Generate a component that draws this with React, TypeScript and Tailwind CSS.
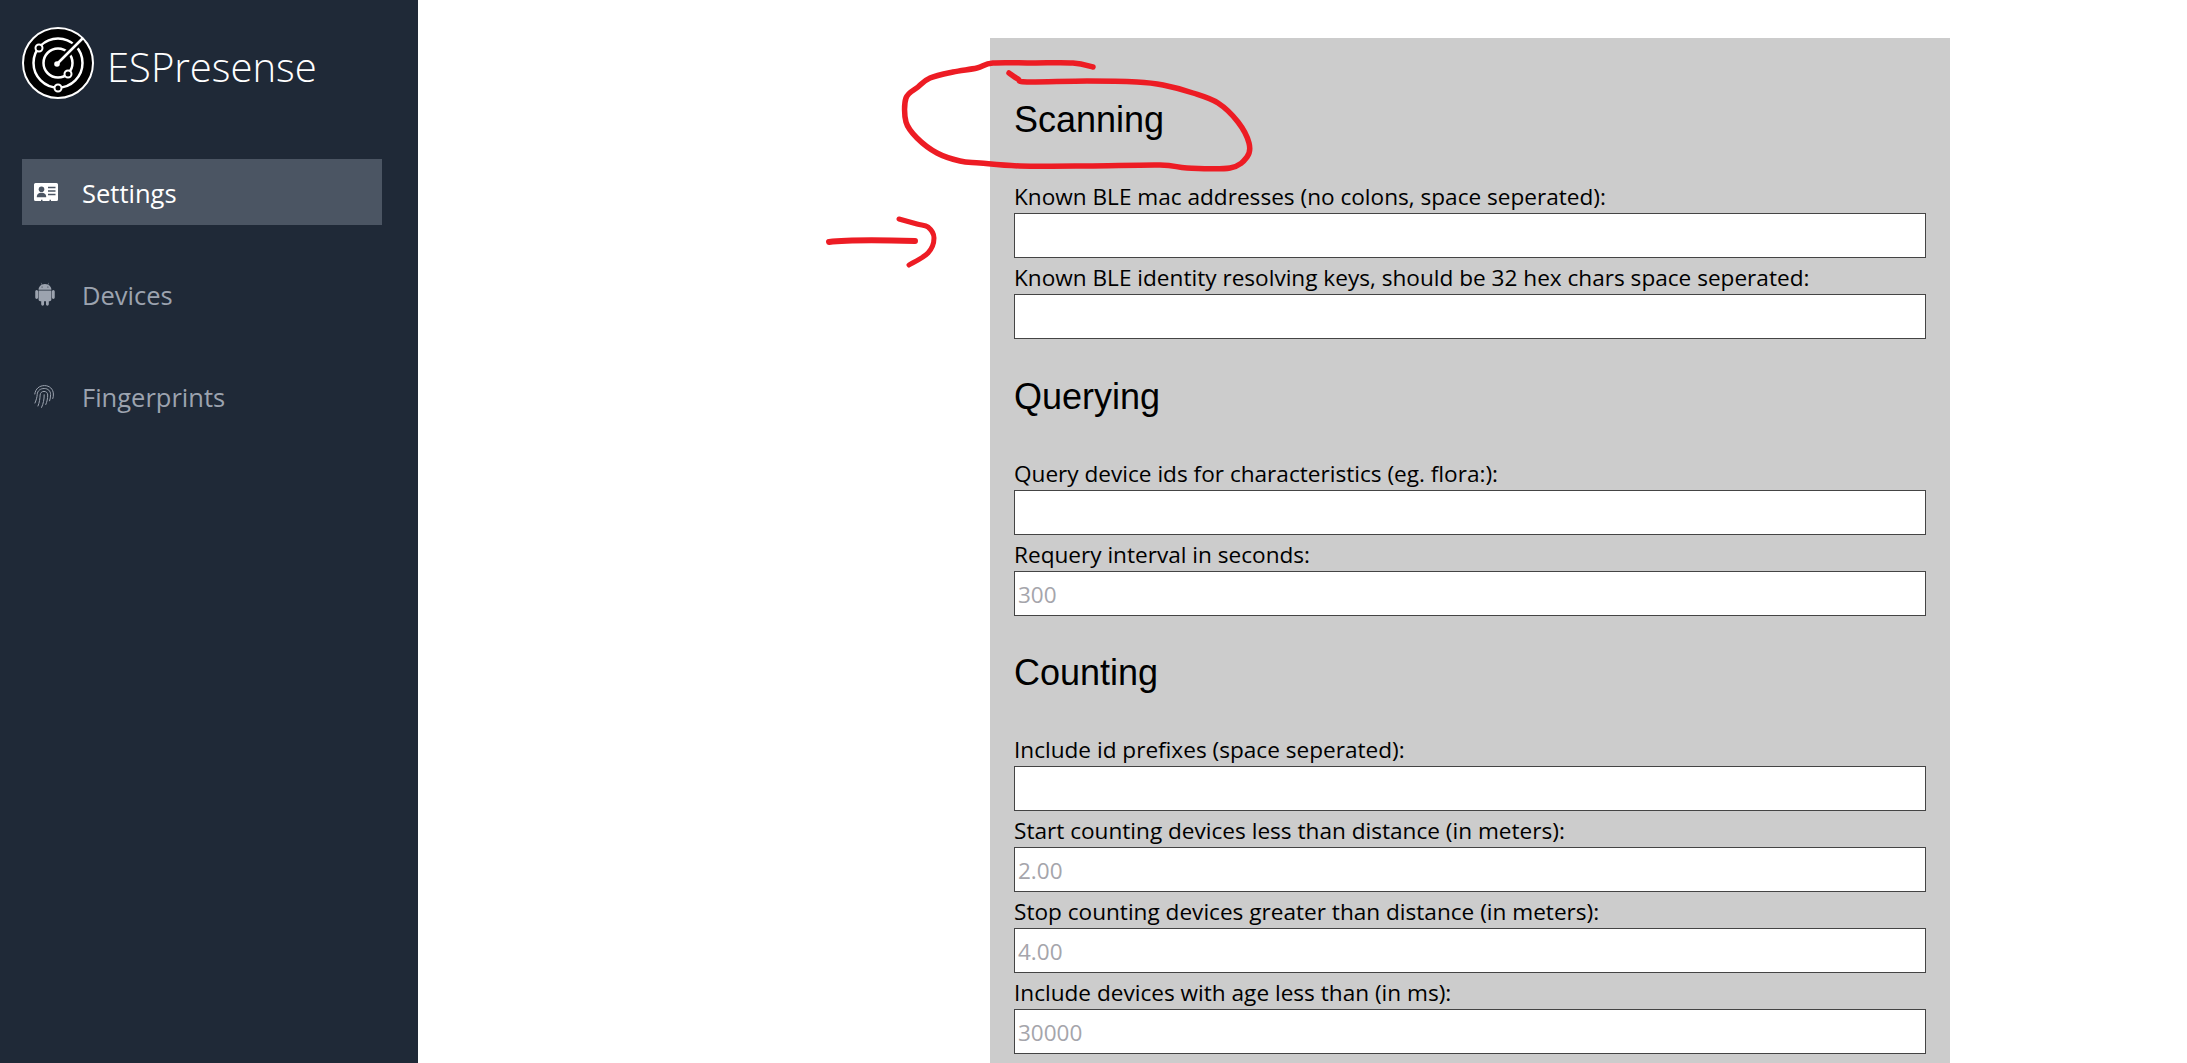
import { DiAndroid } from "react-icons/di";

const IdCard = () => (
  <svg viewBox="0 0 24 18" className="w-[24px] h-[18px]" fill="currentColor">
    <path d="M1.5 0 H22.5 A1.5 1.5 0 0 1 24 1.5 V16.5 A1.5 1.5 0 0 1 22.5 18 H17 V16.8 H15.5 V18 H8.5 V16.8 H7 V18 H1.5 A1.5 1.5 0 0 1 0 16.5 V1.5 A1.5 1.5 0 0 1 1.5 0 Z" />
    <circle cx="7.5" cy="6.2" r="2.8" fill="#4b5563" />
    <path d="M2.8 14.2 C2.8 11 5 9.8 7.5 9.8 C10 9.8 12.2 11 12.2 14.2 Z" fill="#4b5563" />
    <path d="M14 4.6 H21.5 M14 8 H21.5 M14 11.4 H21.5" stroke="#4b5563" strokeWidth="1.5" />
  </svg>
);

const FingerprintIcon = () => (
  <svg viewBox="0 0 20 23" className="w-[20px] h-[23px]" fill="none" stroke="currentColor" strokeWidth="1" strokeLinecap="round">
    <path d="M0.8 9 C1.5 3.5 5.5 0.6 10.5 0.6 C15.5 0.6 19.2 4 19.4 9 C19.5 11 19.2 12.5 18.8 13.5" />
    <path d="M1 18 C2.2 15 3 12.5 3.2 9.5 C3.5 5.5 6.5 3.5 10.2 3.5 C14 3.5 16.6 6 16.6 9.5 C16.6 12 16.2 14 15.6 15.8" />
    <path d="M4 21 C5.5 17.5 6 13.5 6.1 10 C6.2 7.8 8 6.4 10 6.4 C12.2 6.4 13.7 8 13.7 10 C13.7 13.5 13 16.8 11.8 19.5" />
    <path d="M7.6 22.4 C9.4 18.5 10.2 14.5 10.2 9.8" />
  </svg>
);

const navLinks = [
  { name: "Settings", icon: <IdCard />, active: true },
  { name: "Devices", icon: <DiAndroid className="text-[24px] ml-[-1px]" />, active: false },
  { name: "Fingerprints", icon: <FingerprintIcon />, active: false },
];

const sections = [
  {
    title: "Scanning",
    fields: [
      { label: "Known BLE mac addresses (no colons, space seperated):", placeholder: "" },
      { label: "Known BLE identity resolving keys, should be 32 hex chars space seperated:", placeholder: "" },
    ],
  },
  {
    title: "Querying",
    fields: [
      { label: "Query device ids for characteristics (eg. flora:):", placeholder: "" },
      { label: "Requery interval in seconds:", placeholder: "300" },
    ],
  },
  {
    title: "Counting",
    fields: [
      { label: "Include id prefixes (space seperated):", placeholder: "" },
      { label: "Start counting devices less than distance (in meters):", placeholder: "2.00" },
      { label: "Stop counting devices greater than distance (in meters):", placeholder: "4.00" },
      { label: "Include devices with age less than (in ms):", placeholder: "30000" },
    ],
  },
];

// red pen marks drawn on top of the screenshot
const circlePoints = [
  [1093, 67], [1073, 63], [1033, 63], [993, 63], [977, 68], [953, 72], [930, 78], [918, 87], [906, 98],
  [906, 122], [917, 138], [937, 153], [960, 161], [980, 163], [1020, 166], [1087, 166], [1160, 165],
  [1187, 168], [1230, 168], [1247, 157], [1249, 143], [1238, 122], [1218, 103], [1193, 93], [1163, 85],
  [1137, 82], [1087, 81], [1027, 82], [1018, 79], [1009, 73],
];
const arrowPoints = [[899, 219], [917, 224], [928, 227], [934, 238], [928, 253], [909, 265]];

const smooth = (pts: number[][]) => {
  let d = `M${pts[0][0]} ${pts[0][1]}`;
  for (let i = 0; i < pts.length - 1; i++) {
    const p0 = pts[Math.max(i - 1, 0)];
    const p1 = pts[i];
    const p2 = pts[i + 1];
    const p3 = pts[Math.min(i + 2, pts.length - 1)];
    d += ` C${p1[0] + (p2[0] - p0[0]) / 6} ${p1[1] + (p2[1] - p0[1]) / 6} ${p2[0] - (p3[0] - p1[0]) / 6} ${p2[1] - (p3[1] - p1[1]) / 6} ${p2[0]} ${p2[1]}`;
  }
  return d;
};

const Logo = () => (
  <svg viewBox="0 0 72 72" className="w-[72px] h-[72px] shrink-0" fill="none" stroke="white">
    <circle cx="36" cy="36" r="35" fill="black" strokeWidth="2" />
    <circle cx="36" cy="36" r="24.5" strokeWidth="2.5" />
    <circle cx="36" cy="36" r="14.5" strokeWidth="2.5" />
    <path d="M35 37 L60 12" stroke="black" strokeWidth="7" />
    <path d="M35 37 L61 11" strokeWidth="2.5" />
    <circle cx="35" cy="37" r="2.8" fill="white" strokeWidth="0" />
    <circle cx="17" cy="21" r="3.5" fill="black" strokeWidth="2" />
    <circle cx="46" cy="47" r="3.5" fill="black" strokeWidth="2" />
    <circle cx="36" cy="61" r="3.5" fill="black" strokeWidth="2" />
  </svg>
);

const Scribble = () => (
  <svg viewBox="0 0 2187 1063" className="absolute inset-0 w-[2187px] h-[1063px] pointer-events-none" fill="none" stroke="#ed1c24" strokeWidth="5.5" strokeLinecap="round" strokeLinejoin="round">
    <path d={smooth(circlePoints)} />
    <path d="M829 242 C845 240 880 240 915 241" strokeWidth="6" />
    <path d={smooth(arrowPoints)} strokeWidth="5" />
  </svg>
);

const App = () => {
  return (
    <div className="relative flex h-[1063px] w-full overflow-hidden bg-white font-['Open_Sans',sans-serif]">
      <aside className="w-[418px] shrink-0 bg-[#1f2937] px-[22px] pt-[27px]">
        <div className="flex items-center gap-[13px]">
          <Logo />
          <span className="pt-[8px] text-[40px] font-light leading-none text-white">ESPresense</span>
        </div>
        <nav className="mt-[60px] flex w-[360px] flex-col gap-[36px]">
          {navLinks.map((link, index) => (
            <a
              key={index}
              className={`flex h-[66px] items-center pl-[12px] text-[25.5px] ${link.active ? "bg-[#4b5563] text-white" : "text-[#9ca3af]"}`}
            >
              <span className="w-[48px]">{link.icon}</span>
              <span className="pt-[2px]">{link.name}</span>
            </a>
          ))}
        </nav>
      </aside>
      <main className="flex-1 pl-[572px] pt-[38px]">
        <form className="w-[960px] bg-[#cccccc] px-[24px] pt-[24px] pb-[40px] text-[22.6px] text-black">
          {sections.map((section) => (
            <div key={section.title}>
              <h2 className="flex h-[114.8px] items-center pt-[1px] font-['Liberation_Sans',sans-serif] text-[36px]">{section.title}</h2>
              {section.fields.map((field) => (
                <label key={field.label} className="block">
                  <span className="block h-[36px] pt-[1px] leading-[37px]">{field.label}</span>
                  <input
                    placeholder={field.placeholder}
                    className="block h-[45px] w-[912px] border border-[#444444] bg-white px-[3px] pt-[2px] text-[22.5px] placeholder:text-[#a5a5ab]"
                  />
                </label>
              ))}
            </div>
          ))}
        </form>
      </main>
      <Scribble />
    </div>
  );
};

export default App;
